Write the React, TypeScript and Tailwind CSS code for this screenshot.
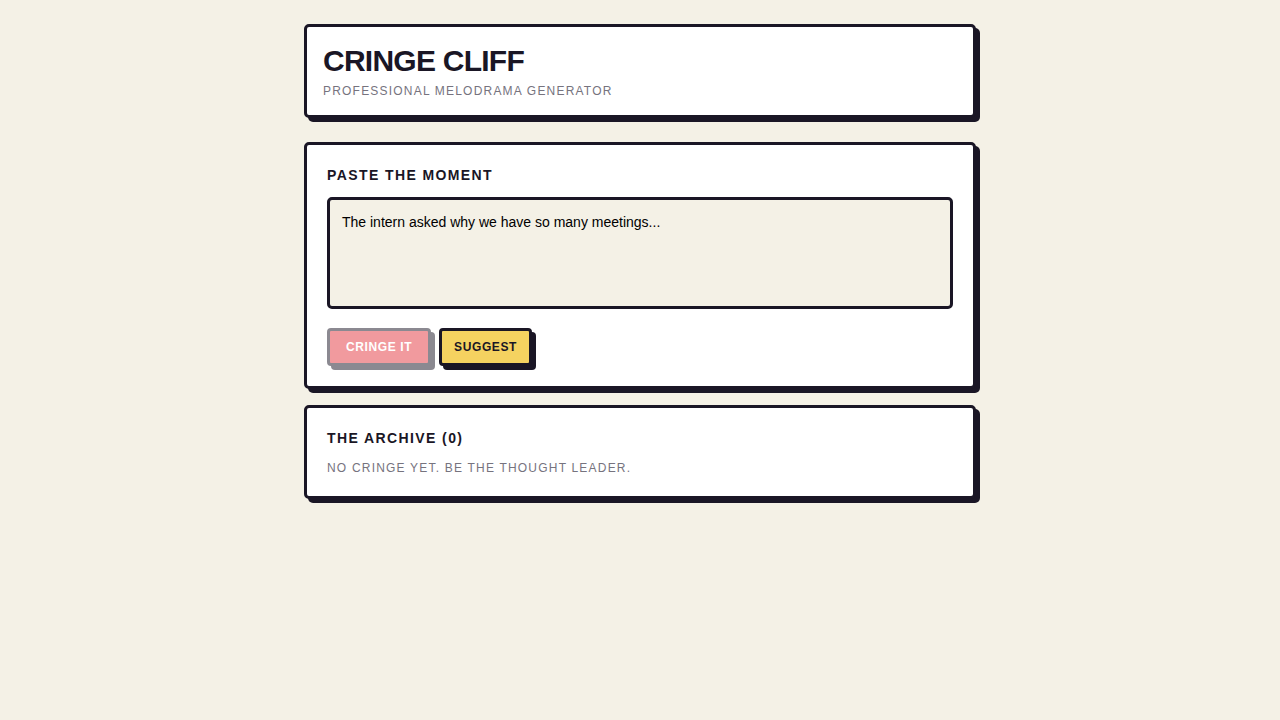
import React from 'react';

const App: React.FC = () => {
  return (
    <div className="min-h-screen bg-[#f4f1e6] font-['Liberation_Sans',Arial,sans-serif] text-[#1a1625]">
      <div className="max-w-2xl mx-auto pt-6 pb-10">
        <header className="bg-white border-[3px] border-[#1a1625] rounded-[5px] shadow-[4px_4px_0_#1a1625] p-4 mb-6">
          <h1 className="text-3xl font-bold tracking-tight leading-9">CRINGE CLIFF</h1>
          <p className="mt-1 text-xs tracking-widest uppercase text-[#76737e]">Professional Melodrama Generator</p>
        </header>

        <div className="space-y-4">
          <section className="bg-white border-[3px] border-[#1a1625] rounded-[5px] shadow-[4px_4px_0_#1a1625] p-5">
            <h2 className="text-sm font-bold tracking-widest uppercase leading-5 mb-3">Paste the Moment</h2>
            <textarea
              className="block w-full h-[112px] resize-none bg-[#f4f1e6] border-[3px] border-[#1a1625] rounded-[5px] px-3 py-3 text-sm leading-5 text-black outline-none"
              defaultValue="The intern asked why we have so many meetings..."
            />
            <div className="flex gap-2 mt-[19px]">
              <button className="opacity-50 bg-[#e5383f] text-white border-[3px] border-[#1a1625] rounded-[4px] shadow-[4px_4px_0_#1a1625] h-[38px] px-4 text-xs font-bold tracking-wider uppercase">
                Cringe It
              </button>
              <button className="bg-[#f5d260] text-[#1a1625] border-[3px] border-[#1a1625] rounded-[4px] shadow-[4px_4px_0_#1a1625] h-[38px] px-3 text-xs font-bold tracking-wider uppercase">
                Suggest
              </button>
            </div>
          </section>

          <section className="bg-white border-[3px] border-[#1a1625] rounded-[5px] shadow-[4px_4px_0_#1a1625] p-5">
            <h2 className="text-sm font-bold tracking-widest uppercase leading-5">The Archive (0)</h2>
            <p className="mt-3 text-xs tracking-widest uppercase text-[#76737e]">No cringe yet. Be the thought leader.</p>
          </section>
        </div>
      </div>
    </div>
  );
};

export default App;
